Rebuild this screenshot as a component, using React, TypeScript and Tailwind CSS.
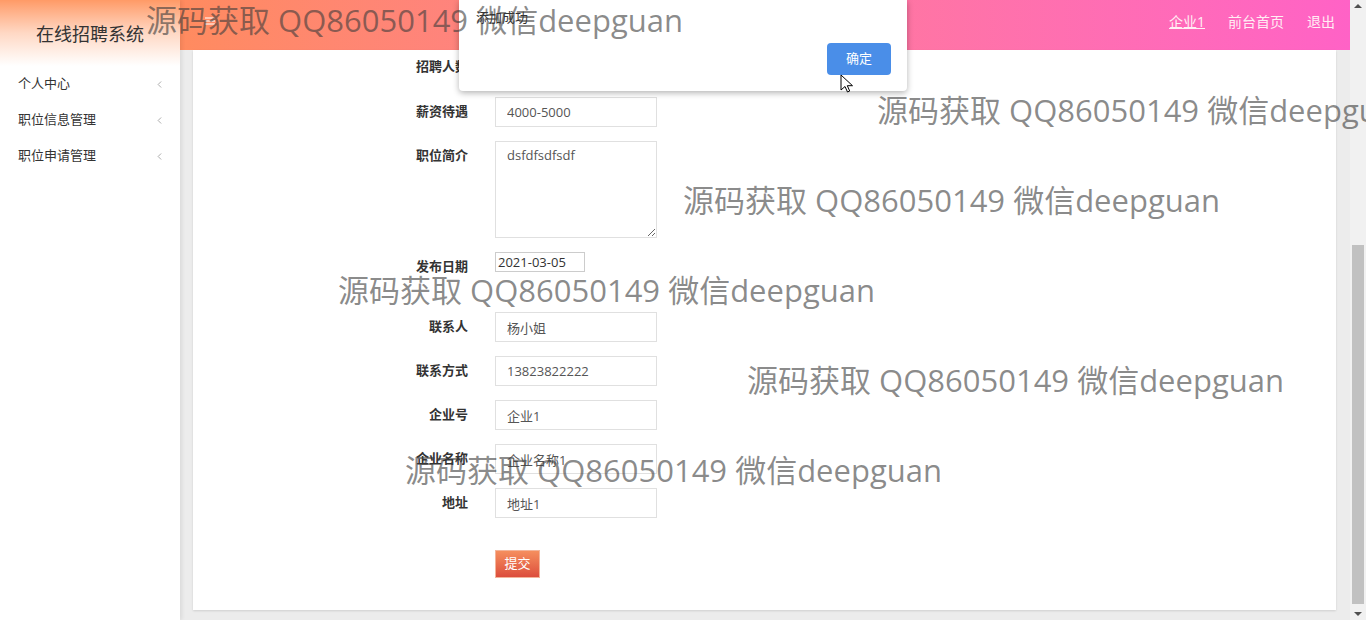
import React from "react";
import { ChevronLeft } from "lucide-react";

const menu = ["个人中心", "职位信息管理", "职位申请管理"];

const fields: { label: string; value: string }[] = [
  { label: "联系人", value: "杨小姐" },
  { label: "联系方式", value: "13823822222" },
  { label: "企业号", value: "企业1" },
  { label: "企业名称", value: "企业名称1" },
  { label: "地址", value: "地址1" },
];

const marks = [
  "left-[146px] top-[5px]",
  "left-[877px] top-[95px]",
  "left-[683px] top-[185px]",
  "left-[338px] top-[275px]",
  "left-[747px] top-[365px]",
  "left-[405px] top-[455px]",
];

const Label = ({ children, className = "" }: { children: React.ReactNode; className?: string }) => (
  <label className={`w-[90px] shrink-0 text-right text-[13px] font-bold text-[#333] mr-[27px] ${className}`}>
    {children}
  </label>
);

const TextInput = ({ value }: { value: string }) => (
  <input
    readOnly
    value={value}
    className="w-[162px] h-[30px] border border-[#e0e0e0] px-[11px] text-[13px] text-[#555] outline-none"
  />
);

const App = (): JSX.Element => {
  return (
    <div className="relative w-[1366px] h-[620px] overflow-hidden flex bg-[#ececec] font-['Open_Sans','Noto_Sans_CJK_SC',sans-serif]">
      {/* sidebar */}
      <aside className="w-[180px] shrink-0 bg-white shadow-[2px_0_4px_rgba(0,0,0,0.08)] z-10 flex flex-col">
        <div className="h-[66px] bg-gradient-to-b from-[#ff9a66] via-[#ffd8c4] to-white flex items-center justify-center pt-[3px]">
          <span className="text-[18px] text-[#333]">在线招聘系统</span>
        </div>
        <ul className="flex flex-col">
          {menu.map((m) => (
            <li key={m} className="h-[36px] flex items-center justify-between pl-[18px] pr-[15px] text-[13px] text-[#333]">
              <span>{m}</span>
              <ChevronLeft size={11} strokeWidth={1.5} className="text-[#888]" />
            </li>
          ))}
        </ul>
      </aside>

      {/* main column */}
      <div className="flex-1 flex flex-col min-w-0">
        <header className="h-[50px] shrink-0 bg-gradient-to-r from-[#ff8b5f] to-[#ff62c6] flex items-center justify-between pl-[24px] pr-[15px] pb-[8px]">
          <svg width="12" height="12" viewBox="0 0 12 12" className="text-white/70">
            <path d="M1 3h10M1 6h10M1 9h10" stroke="currentColor" strokeWidth="1.5" />
          </svg>
          <nav className="flex items-center gap-[23px] text-[14px] text-[#ffeef4]">
            <span className="underline">企业1</span>
            <span>前台首页</span>
            <span>退出</span>
          </nav>
        </header>

        <main className="flex-1 pl-[13px] pr-[14px] pb-[10px] min-h-0">
          <div className="h-full bg-white shadow-[0_1px_2px_rgba(0,0,0,0.12)] pl-[185px] pt-[2px]">
            <div className="flex items-center mb-[15px]">
              <Label>招聘人数</Label>
              <TextInput value="10" />
            </div>
            <div className="flex items-center mb-[14px]">
              <Label>薪资待遇</Label>
              <TextInput value="4000-5000" />
            </div>
            <div className="flex items-start mb-[14px]">
              <Label className="leading-[29px]">职位简介</Label>
              <textarea
                readOnly
                defaultValue="dsfdfsdfsdf"
                className="w-[162px] h-[97px] border border-[#e0e0e0] px-[11px] pt-[4px] text-[13px] leading-[18px] text-[#555] outline-none"
              />
            </div>
            <div className="flex items-start h-[60px]">
              <Label className="leading-[29px]">发布日期</Label>
              <input
                readOnly
                value="2021-03-05"
                className="w-[90px] h-[20px] border border-[#ccc] px-[2px] text-[13px] text-[#333] outline-none"
              />
            </div>
            {fields.map((f) => (
              <div key={f.label} className="flex items-center mb-[14px]">
                <Label>{f.label}</Label>
                <TextInput value={f.value} />
              </div>
            ))}
            <button className="ml-[117px] mt-[18px] w-[45px] h-[28px] bg-gradient-to-b from-[#f58e5e] to-[#dc4d3d] text-white text-[13px] border border-[#f4b49a]">
              提交
            </button>
          </div>
        </main>
      </div>

      {/* scrollbar */}
      <div className="w-[16px] shrink-0 bg-[#f1f1f1] flex flex-col items-center justify-between py-[4px]">
        <div className="w-0 h-0 border-l-[4px] border-r-[4px] border-b-[4px] border-l-transparent border-r-transparent border-b-[#505050]" />
        <div className="w-[12px] h-[359px] bg-[#c1c1c1] mt-auto mb-[8px]" />
        <div className="w-0 h-0 border-l-[4px] border-r-[4px] border-t-[4px] border-l-transparent border-r-transparent border-t-[#505050]" />
      </div>

      {/* alert dialog */}
      <div className="absolute left-[459px] top-0 w-[448px] h-[91px] bg-white rounded-b-[4px] shadow-[0_2px_6px_rgba(0,0,0,0.3)] flex flex-col z-20">
        <p className="pl-[17px] pt-[8px] text-[13px] leading-[18px] text-[#333]">添加成功</p>
        <button className="self-end mr-[16px] mt-[17px] w-[64px] h-[32px] rounded-[4px] bg-[#4a8ee8] text-white text-[13px]">
          确定
        </button>
      </div>

      {/* watermarks */}
      {marks.map((pos) => (
        <div
          key={pos}
          className={`absolute ${pos} z-30 whitespace-nowrap text-[31px] leading-[31px] text-[rgba(60,60,60,0.6)] pointer-events-none`}
        >
          源码获取 QQ86050149 微信deepguan
        </div>
      ))}

      {/* mouse cursor */}
      <svg className="absolute left-[840px] top-[74px] z-40" width="13" height="20" viewBox="0 0 13 20">
        <path d="M1 1v15l4-3.5 2.5 5.5 2.2-1-2.4-5.3H12.5z" fill="#fff" stroke="#000" strokeWidth="1" />
      </svg>
    </div>
  );
};

export default App;
